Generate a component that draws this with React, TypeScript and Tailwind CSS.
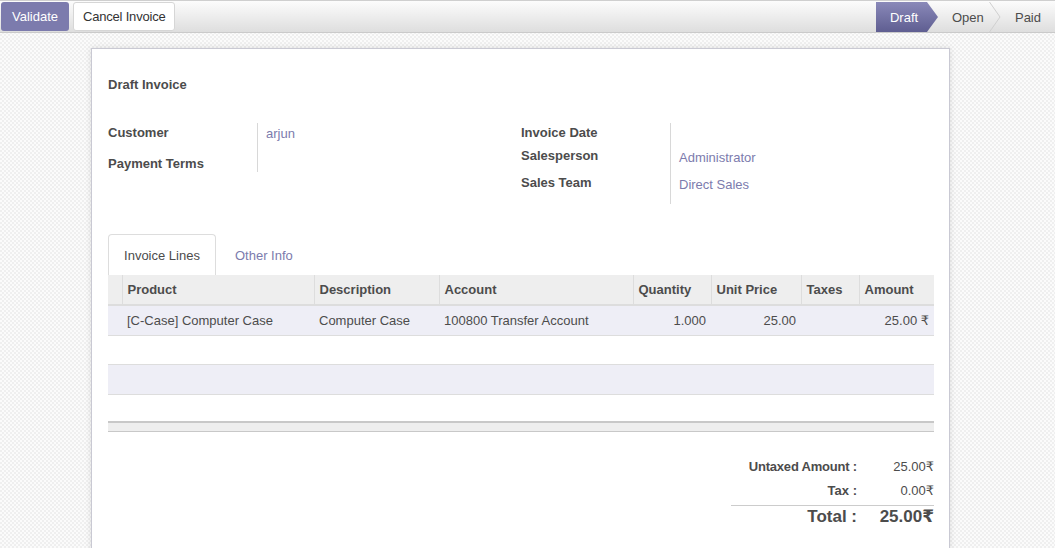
import React from "react";

const font = "font-['Liberation_Sans',Arial,'DejaVu_Sans',sans-serif]";

const columns = [
  { label: "", w: "w-[14px]", align: "text-left" },
  { label: "Product", w: "w-[192px]", align: "text-left" },
  { label: "Description", w: "w-[125px]", align: "text-left" },
  { label: "Account", w: "w-[194px]", align: "text-left" },
  { label: "Quantity", w: "w-[78px]", align: "text-right" },
  { label: "Unit Price", w: "w-[90px]", align: "text-right" },
  { label: "Taxes", w: "w-[58px]", align: "text-left" },
  { label: "Amount", w: "w-[75px]", align: "text-right" },
];

const lines = [
  ["", "[C-Case] Computer Case", "Computer Case", "100800 Transfer Account", "1.000", "25.00", "", "25.00 ₹"],
];

const StatusBar = () => (
  <div className="flex items-stretch h-[30px] self-start mt-[1px]">
    <div className="relative w-[62px] bg-gradient-to-b from-[#8a89b9] to-[#5f5e91] text-white flex items-center pl-[14px] pt-[1px] [clip-path:polygon(0_0,calc(100%-11px)_0,100%_50%,calc(100%-11px)_100%,0_100%)]">
      Draft
    </div>
    <div className="relative flex items-center pl-[14px] pt-[1px] w-[52px]">Open</div>
    <svg width="12" height="30" viewBox="0 0 12 30" className="-ml-[1px]">
      <polyline points="0.5,0 11,15 0.5,30" fill="none" stroke="#cfcfcf" strokeWidth="1" />
    </svg>
    <div className="flex items-center pl-[14px] pr-[14px] pt-[1px]">Paid</div>
  </div>
);

export default function App() {
  return (
    <div
      className={`${font} text-[13px] leading-[18px] text-[#4c4c4c] w-[1055px] h-[548px] overflow-hidden bg-[#f7f7f7] bg-[image:repeating-conic-gradient(#efefef_0_25%,#fbfbfb_0_50%)] bg-[size:4px_4px]`}
    >
      {/* Control panel */}
      <div className="h-[33px] flex justify-between bg-gradient-to-b from-[#fcfcfc] to-[#dedede] border-t border-t-[#cfcfcf] border-b border-b-[#cacaca]">
        <div className="flex items-start gap-[4px] pl-[1px] pt-[1px]">
          <button className="h-[29px] px-[11px] pt-[1px] rounded-[3px] bg-[#7c7bad] text-white">Validate</button>
          <button className="h-[29px] px-[9px] pt-[1px] rounded-[3px] bg-white border border-[#d6d6d6] text-[#333] tracking-[-0.2px]">
            Cancel Invoice
          </button>
        </div>
        <StatusBar />
      </div>

      {/* Sheet */}
      <div className="ml-[91px] mt-[15px] w-[859px] min-h-[600px] bg-white border border-[#c9c9d3] shadow-[0_0_6px_rgba(0,0,0,0.12)] pl-[16px] pr-[15px] pt-[27px]">
        <div className="font-bold">Draft Invoice</div>

        <div className="flex mt-[29px]">
          <div className="w-[413px]">
            <div className="flex h-[27px]">
              <div className="w-[149px] font-bold pt-[1px]">Customer</div>
              <div className="flex-1 border-l border-[#d8d8d8] pl-[8px] pt-[2px] text-[#7c7bad]">arjun</div>
            </div>
            <div className="flex h-[22px]">
              <div className="w-[149px] font-bold pt-[5px]">Payment Terms</div>
              <div className="flex-1 border-l border-[#d8d8d8]"></div>
            </div>
          </div>
          <div className="w-[413px]">
            <div className="flex h-[23px]">
              <div className="w-[149px] font-bold pt-[1px]">Invoice Date</div>
              <div className="flex-1 border-l border-[#d8d8d8]"></div>
            </div>
            <div className="flex h-[27px]">
              <div className="w-[149px] font-bold pt-[1px]">Salesperson</div>
              <div className="flex-1 border-l border-[#d8d8d8] pl-[8px] pt-[3px] text-[#7c7bad]">Administrator</div>
            </div>
            <div className="flex h-[31px]">
              <div className="w-[149px] font-bold pt-[1px]">Sales Team</div>
              <div className="flex-1 border-l border-[#d8d8d8] pl-[8px] pt-[3px] text-[#7c7bad]">Direct Sales</div>
            </div>
          </div>
        </div>

        {/* Tabs */}
        <div className="flex mt-[30px] h-[41px]">
          <div className="w-[108px] border border-b-0 border-[#dddddd] rounded-t-[4px] flex items-center justify-center pt-[1px] bg-white">
            Invoice Lines
          </div>
          <div className="px-[19px] pt-[2px] flex items-center text-[#7c7bad]">Other Info</div>
        </div>

        <table className="w-[826px] table-fixed border-collapse">
          <colgroup>
            {columns.map((c, i) => (
              <col key={i} className={c.w} />
            ))}
          </colgroup>
          <thead>
            <tr className="bg-[#eeeeee] h-[30px] border-b-2 border-[#dddddd]">
              {columns.map((c, i) => (
                <th
                  key={i}
                  className={`text-left font-bold px-[5px] ${i > 0 ? "border-l border-[#dddddd]" : ""} whitespace-nowrap`}
                >
                  {c.label}
                </th>
              ))}
            </tr>
          </thead>
          <tbody>
            {lines.map((row, r) => (
              <tr key={r} className="bg-[#eeeef6] h-[30px] border-b border-[#dddddd]">
                {row.map((cell, i) => (
                  <td key={i} className={`${columns[i].align} px-[5px] pt-[1px] whitespace-nowrap`}>
                    {cell}
                  </td>
                ))}
              </tr>
            ))}
            <tr className="h-[29px] bg-white border-b border-[#dddddd]">
              <td colSpan={8}></td>
            </tr>
            <tr className="h-[30px] bg-[#eeeef6] border-b border-[#dddddd]">
              <td colSpan={8}></td>
            </tr>
            <tr className="h-[28px] bg-white">
              <td colSpan={8}></td>
            </tr>
          </tbody>
          <tfoot>
            <tr className="h-[9px] bg-[#eeeeee] border-t-2 border-b border-[#c8c8c8]">
              <td colSpan={8}></td>
            </tr>
          </tfoot>
        </table>

        {/* Totals */}
        <div className="flex justify-end mt-[26px]">
          <div className="w-[203px]">
            <div className="flex justify-end h-[24px]">
              <div className="font-bold whitespace-nowrap text-right tracking-[-0.2px]">Untaxed Amount :</div>
              <div className="w-[77px] text-right">25.00₹</div>
            </div>
            <div className="flex justify-end h-[24px]">
              <div className="font-bold text-right">Tax :</div>
              <div className="w-[77px] text-right">0.00₹</div>
            </div>
            <div className="border-t border-[#cccccc] -mt-[1px] flex justify-end">
              <div className="font-bold text-[17px] leading-[22px] text-right">Total :</div>
              <div className="w-[77px] font-bold text-[17px] leading-[22px] text-right">25.00₹</div>
            </div>
          </div>
        </div>
      </div>
    </div>
  );
}
